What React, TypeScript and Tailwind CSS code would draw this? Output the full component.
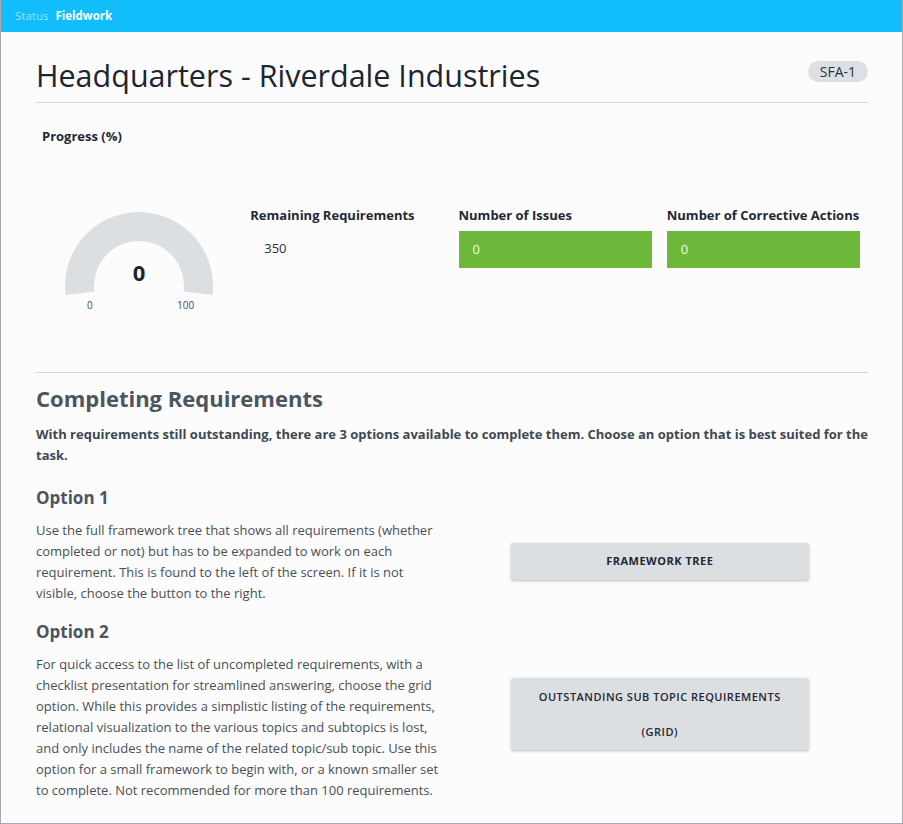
import React from 'react';

const font = { fontFamily: '"Open Sans", Lato, sans-serif' };

function Gauge() {
  // outer r 74, inner r 45, arc a bit wider than a half circle
  const cx = 104;
  const cy = 84;
  const a0 = (187 * Math.PI) / 180;
  const a1 = (-7 * Math.PI) / 180;
  const pt = (r: number, a: number) => `${cx + r * Math.cos(a)} ${cy - r * Math.sin(a)}`;
  const d = `M ${pt(74, a0)} A 74 74 0 1 1 ${pt(74, a1)} L ${pt(45, a1)} A 45 45 0 1 0 ${pt(45, a0)} Z`;
  return (
    <div className="relative h-[120px] w-[208px]">
      <svg width="208" height="110" viewBox="0 0 208 110" className="absolute left-0 top-0">
        <path d={d} fill="#dcdfe2" />
      </svg>
      <div className="absolute left-0 right-0 top-[55px] text-center text-[22px] font-bold leading-[30px] text-[#1d2530]">0</div>
      <div className="absolute left-[52px] top-[96px] text-[10px] leading-[14px] text-[#4b4a66]">0</div>
      <div className="absolute left-[142px] top-[96px] text-[10px] leading-[14px] text-[#4b4a66]">100</div>
    </div>
  );
}

function Stat({ label, value, green }: { label: string; value: string; green?: boolean }) {
  return (
    <div className="pl-[7px] pt-[5px]">
      <div className="text-[13px] font-bold leading-[20px] text-[#1f2833]">{label}</div>
      {green ? (
        <div className="mt-[6px] flex h-[37px] w-[193px] items-center bg-[#6db83a] px-[14px] text-[13px] text-[#f4f7e6]">{value}</div>
      ) : (
        <div className="mt-[13px] pl-[14px] text-[13px] leading-[20px] text-[#2a323c]">{value}</div>
      )}
    </div>
  );
}

export default function App() {
  return (
    <div style={font} className="h-[824px] w-[903px] border-x border-b border-[#a7abaf] bg-[#fcfcfc]">
      <div className="flex h-[32px] items-center gap-[7px] bg-[#12bdfb] px-[14px] text-[11.5px]">
        <span className="text-[#9ee3fd]">Status</span>
        <span className="font-bold text-white">Fieldwork</span>
      </div>

      <div className="mx-[34px]">
        <div className="flex items-start justify-between border-b border-[#d6d9dc] pb-[6px] pt-[23px]">
          <h1 className="pl-[1px] text-[30.5px] leading-[41px] text-[#1d2530]">Headquarters - Riverdale Industries</h1>
          <span className="mt-[6px] rounded-full bg-[#dcdfe3] px-[12px] text-[14px] leading-[21px] text-[#2a323c]">SFA-1</span>
        </div>

        <div className="border-b border-[#d6d9dc] pb-[50px]">
          <div className="pl-[7px] pt-[23px] text-[13px] font-bold leading-[20px] text-[#1f2833]">Progress (%)</div>
          <div className="mt-[54px] grid grid-cols-4">
            <div className="pt-[2px]">
              <Gauge />
            </div>
            <Stat label="Remaining Requirements" value="350" />
            <Stat label="Number of Issues" value="0" green />
            <Stat label="Number of Corrective Actions" value="0" green />
          </div>
        </div>

        <h2 className="pl-[1px] pt-[10px] text-[22px] font-bold leading-[30px] text-[#4a5560]">Completing Requirements</h2>
        <p className="mt-[11px] pl-[1px] text-[13px] font-bold leading-[21px] text-[#3f4850]">
          With requirements still outstanding, there are 3 options available to complete them. Choose an option that is best suited for the task.
        </p>

        <h3 className="mt-[20px] pl-[1px] text-[17px] font-bold leading-[24px] text-[#4a5560]">Option 1</h3>
        <div className="grid grid-cols-2">
          <p className="mt-[10px] max-w-[407px] pl-[1px] text-[13px] leading-[21px] text-[#4a4f55]">
            Use the full framework tree that shows all requirements (whether completed or not) but has to be expanded to work on each requirement. This is found to the left of the screen. If it is not visible, choose the button to the right.
          </p>
          <div className="flex items-center justify-center pt-[8px]">
            <button className="h-[37px] w-[298px] rounded-[3px] bg-[#dcdfe2] text-[11px] font-bold tracking-[0.5px] text-[#1f2833] shadow-[0_1px_3px_rgba(0,0,0,0.25)]">
              FRAMEWORK TREE
            </button>
          </div>
        </div>

        <h3 className="mt-[16px] pl-[1px] text-[17px] font-bold leading-[24px] text-[#4a5560]">Option 2</h3>
        <div className="grid grid-cols-2">
          <p className="mt-[10px] max-w-[407px] pl-[1px] text-[13px] leading-[21px] text-[#4a4f55]">
            For quick access to the list of uncompleted requirements, with a checklist presentation for streamlined answering, choose the grid option. While this provides a simplistic listing of the requirements, relational visualization to the various topics and subtopics is lost, and only includes the name of the related topic/sub topic. Use this option for a small framework to begin with, or a known smaller set to complete. Not recommended for more than 100 requirements.
          </p>
          <div className="flex items-start justify-center pt-[34px]">
            <button className="h-[72px] w-[298px] rounded-[3px] bg-[#dcdfe2] text-[11px] font-semibold leading-[35px] tracking-[0.5px] text-[#1f2833] shadow-[0_1px_3px_rgba(0,0,0,0.25)]">
              OUTSTANDING SUB TOPIC REQUIREMENTS
              <br />
              (GRID)
            </button>
          </div>
        </div>
      </div>
    </div>
  );
}
